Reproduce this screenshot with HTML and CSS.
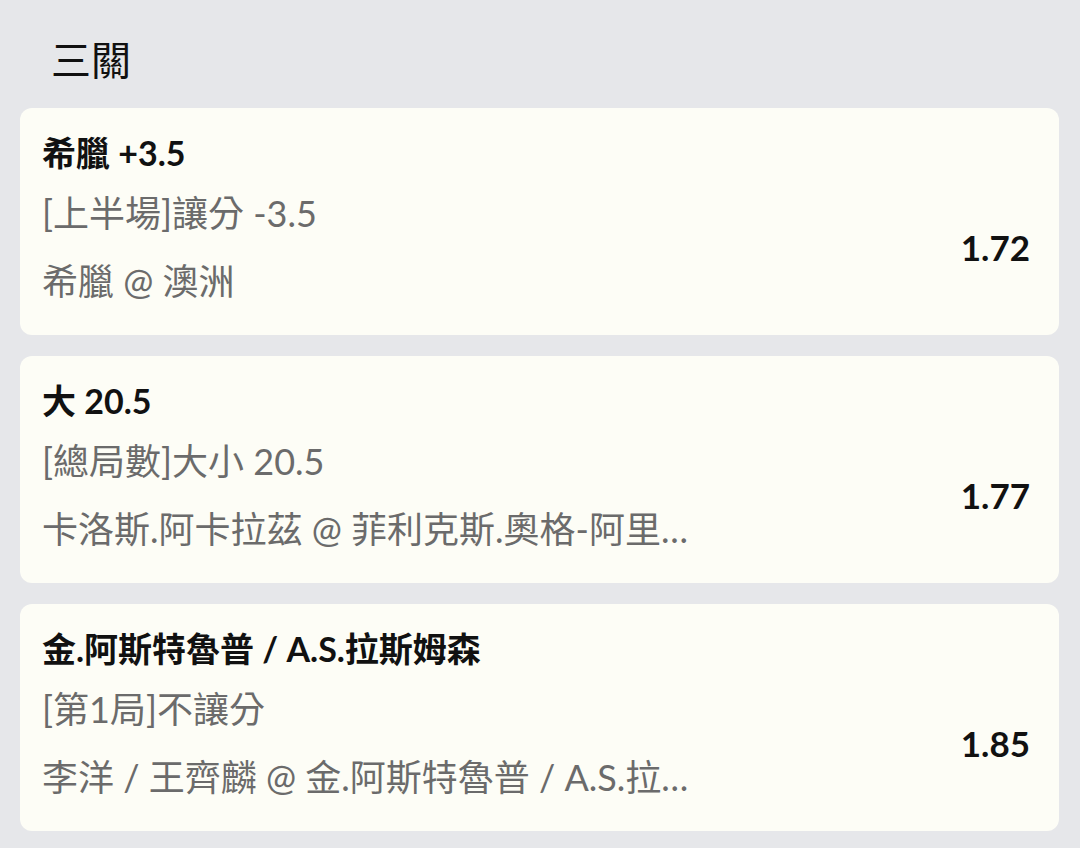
FILE: index.html
```html
<!DOCTYPE html>
<html lang="zh-Hant">
<head>
    <meta charset="UTF-8">
    <meta name="viewport" content="width=device-width, initial-scale=1.0">
    <title>三關</title>
    <link rel="stylesheet" href="styles.css">
</head>
<body>
    <div class="page">
        <h1 class="heading">三關</h1>

        <div class="bet">
            <div class="bet-title">希臘 +3.5</div>
            <div class="bet-body">
                <div class="bet-info">
                    <div class="market">[上半場]讓分 -3.5</div>
                    <div class="match">希臘 @ 澳洲</div>
                </div>
                <div class="odds">1.72</div>
            </div>
        </div>

        <div class="bet">
            <div class="bet-title">大 20.5</div>
            <div class="bet-body">
                <div class="bet-info">
                    <div class="market">[總局數]大小 20.5</div>
                    <div class="match">卡洛斯.阿卡拉茲 @ 菲利克斯.奧格-阿里亞西姆</div>
                </div>
                <div class="odds">1.77</div>
            </div>
        </div>

        <div class="bet">
            <div class="bet-title">金.阿斯特魯普 / A.S.拉斯姆森</div>
            <div class="bet-body">
                <div class="bet-info">
                    <div class="market">[第1局]不讓分</div>
                    <div class="match">李洋 / 王齊麟 @ 金.阿斯特魯普 / A.S.拉斯姆森</div>
                </div>
                <div class="odds">1.85</div>
            </div>
        </div>
    </div>
</body>
</html>
```

FILE: styles.css
```css
body {
    margin: 0;
    font-family: "Lato", "Noto Sans CJK TC", sans-serif;
    background-color: #e6e7ea;
    color: #111;
}
.page {
    padding: 32px 21px 0 20px;
    display: flex;
    flex-direction: column;
    gap: 21px;
}
.heading {
    margin: 0 0 -1px 31px;
    font-size: 40px;
    font-weight: 400;
    line-height: 56px;
}
.bet {
    background: #fdfdf6;
    border-radius: 12px;
    padding: 23px 29px 32px 22px;
}
.bet-title {
    font-size: 34px;
    font-weight: 700;
    line-height: 44px;
}
.bet-body {
    display: flex;
    align-items: center;
    margin-top: 16px;
}
.bet-info {
    width: 668px;
    font-size: 36px;
    line-height: 44px;
    color: #6b6b6b;
}
.match {
    margin-top: 24px;
    white-space: nowrap;
    overflow: hidden;
    text-overflow: ellipsis;
}
.odds {
    margin-left: auto;
    font-size: 35px;
    font-weight: 700;
    line-height: 44px;
}
```
